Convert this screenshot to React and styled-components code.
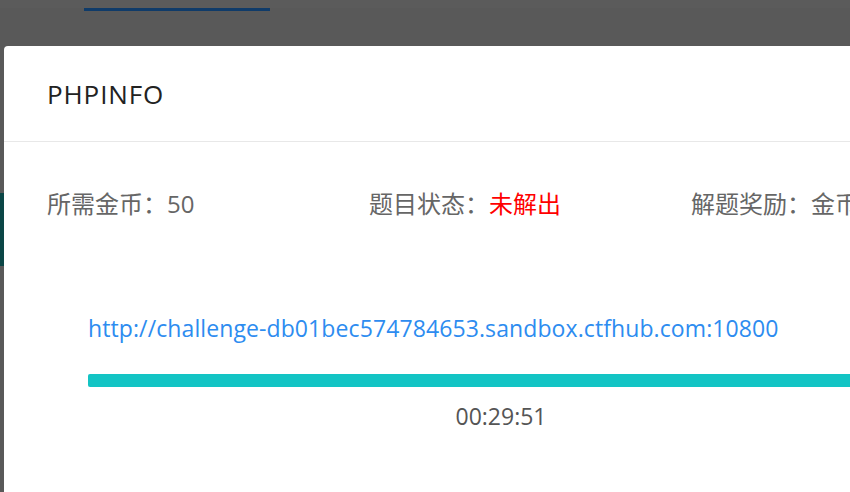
import React from 'react';
import styled, { createGlobalStyle } from 'styled-components';

const GlobalStyle = createGlobalStyle`
  html, body {
    margin: 0;
    padding: 0;
    width: 100%;
    height: 100%;
    overflow: hidden;
    background: #595959;
  }
  body {
    font-family: "Open Sans", "Noto Sans CJK SC", sans-serif;
  }
`;

// page under the mask, already dimmed
const Page = styled.div`
  height: 492px;
  background: #595959;
`;

const NavBar = styled.div`
  height: 8px;
  background: #5b5b5b;
  display: flex;
  padding-left: 84px;
`;

const NavTab = styled.div`
  width: 186px;
  height: 8px;
  border-bottom: 3px solid #0f3b69;
`;

const Banner = styled.div`
  margin-top: 185px;
  height: 73px;
  background: #0b4646;
`;

const Modal = styled.div`
  position: fixed;
  top: 46px;
  left: 4px;
  width: 1052px;
  height: 600px;
  background: #fff;
  border-radius: 4px;
`;

const ModalHeader = styled.div`
  height: 95px;
  padding: 0 43px;
  display: flex;
  align-items: center;
  border-bottom: 1px solid #e8e8e8;
`;

const Title = styled.h3`
  margin: 0;
  font-size: 26px;
  font-weight: 400;
  color: #222;
  letter-spacing: 0.9px;
`;

const ModalBody = styled.div`
  padding: 47px 43px 0;
`;

const InfoRow = styled.div`
  display: grid;
  grid-template-columns: repeat(3, 322px);
  line-height: 30px;
`;

const InfoItem = styled.div`
  font-size: 24px;
  color: #666;
  white-space: nowrap;
`;

const Value = styled.span`
  color: ${props => props.danger ? '#ff0000' : '#666'};
`;

const EnvBox = styled.div`
  margin: 94px 0 0 41px;
  width: 826px;
`;

const EnvLink = styled.a`
  display: block;
  font-size: 23px;
  line-height: 30px;
  color: #2d8cf0;
  text-decoration: none;
  white-space: nowrap;
  letter-spacing: 0.1px;
`;

const Progress = styled.div`
  margin-top: 31px;
  height: 13px;
  background: #ebeef5;
  border-radius: 2px;
  overflow: hidden;
`;

const ProgressFill = styled.div`
  height: 100%;
  background: #13c4c4;
`;

const Timer = styled.div`
  margin-top: 14px;
  text-align: center;
  font-size: 23px;
  line-height: 30px;
  color: #555;
`;

const App = () => {
  const total = 30 * 60;
  const left = 29 * 60 + 51;

  return (
    <>
      <GlobalStyle />
      <Page>
        <NavBar>
          <NavTab />
        </NavBar>
        <Banner />
      </Page>
      <Modal>
        <ModalHeader>
          <Title>PHPINFO</Title>
        </ModalHeader>
        <ModalBody>
          <InfoRow>
            <InfoItem>所需金币：<Value>50</Value></InfoItem>
            <InfoItem>题目状态：<Value danger>未解出</Value></InfoItem>
            <InfoItem>解题奖励：金币</InfoItem>
          </InfoRow>
          <EnvBox>
            <EnvLink href="#">http://challenge-db01bec574784653.sandbox.ctfhub.com:10800</EnvLink>
            <Progress>
              <ProgressFill style={{ width: `${(left / total) * 100}%` }} />
            </Progress>
            <Timer>00:29:51</Timer>
          </EnvBox>
        </ModalBody>
      </Modal>
    </>
  );
};

export default App;
